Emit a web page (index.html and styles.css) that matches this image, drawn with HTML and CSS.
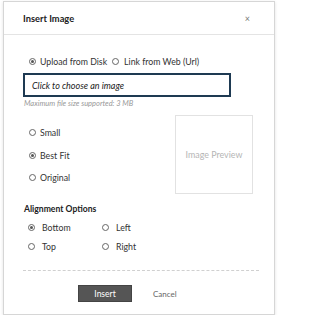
FILE: index.html
```html
<!DOCTYPE html>
<html>
<head>
<meta charset="utf-8">
<link rel="stylesheet" href="styles.css">
</head>
<body>
<div class="dialog">
  <div class="header">
    <span class="title">Insert Image</span>
    <span class="close">×</span>
  </div>
  <div class="body">
    <div class="source">
      <label class="opt"><span class="radio on"></span>Upload from Disk</label>
      <label class="opt"><span class="radio"></span>Link from Web (Url)</label>
    </div>
    <div class="file">Click to choose an image</div>
    <div class="hint">Maximum file size supported: 3 MB</div>
    <div class="sizes">
      <div class="size-list">
        <label class="opt"><span class="radio"></span>Small</label>
        <label class="opt"><span class="radio on"></span>Best Fit</label>
        <label class="opt"><span class="radio"></span>Original</label>
      </div>
      <div class="preview">Image Preview</div>
    </div>
    <div class="heading">Alignment Options</div>
    <div class="align">
      <label class="opt"><span class="radio on"></span>Bottom</label>
      <label class="opt"><span class="radio"></span>Left</label>
      <label class="opt"><span class="radio"></span>Top</label>
      <label class="opt"><span class="radio"></span>Right</label>
    </div>
    <div class="footer">
      <button class="btn-insert">Insert</button>
      <span class="cancel">Cancel</span>
    </div>
  </div>
</div>
</body>
</html>
```
FILE: styles.css
```css
html, body {
  margin: 0;
  padding: 0;
  background: #fff;
}
body {
  font-family: Lato, "Open Sans", sans-serif;
  color: #333;
  font-size: 8.75px;
}
.dialog {
  box-sizing: border-box;
  margin: 1px 0 0 3px;
  width: 272px;
  height: 314px;
  border: 1px solid #d6d6d6;
  box-shadow: 0 1px 3px rgba(0,0,0,0.12);
  background: #fff;
}
.header {
  height: 32px;
  border-bottom: 1px solid #e4e4e4;
  display: flex;
  align-items: center;
  justify-content: space-between;
  padding: 0 24px 0 19px;
}
.title {
  font-weight: bold;
  font-size: 9.3px;
  color: #222;
}
.close {
  font-size: 9px;
  color: #777;
}
.body {
  padding: 0 16px 0 19px;
}
.opt {
  display: flex;
  align-items: center;
  white-space: nowrap;
}
.radio {
  box-sizing: border-box;
  width: 7px;
  height: 7px;
  border: 1px solid #666;
  border-radius: 50%;
  margin-right: 4px;
  display: inline-flex;
  align-items: center;
  justify-content: center;
  flex: none;
}
.radio.on::after {
  content: "";
  width: 3px;
  height: 3px;
  border-radius: 50%;
  background: #555;
}
.source {
  display: flex;
  gap: 5px;
  padding: 20px 0 0 6px;
  height: 13px;
}
.source .opt + .opt .radio {
  margin-right: 5px;
}
.file {
  box-sizing: border-box;
  margin-top: 5px;
  width: 208px;
  height: 24px;
  border: 2px solid #1e3a52;
  font-style: italic;
  font-size: 9px;
  color: #222;
  display: flex;
  align-items: center;
  padding-left: 7px;
}
.hint {
  font-style: italic;
  font-size: 7.5px;
  color: #999;
  margin-top: 2px;
  padding-left: 1px;
}
.sizes {
  display: flex;
  justify-content: space-between;
  margin-top: 6px;
  padding-right: 5px;
}
.size-list {
  display: flex;
  flex-direction: column;
  gap: 9.5px;
  padding: 12px 0 0 6px;
}
.size-list .opt {
  height: 13px;
}
.preview {
  box-sizing: border-box;
  width: 78px;
  height: 79px;
  margin-top: 1px;
  border: 1px solid #e2e2e2;
  display: flex;
  align-items: center;
  justify-content: center;
  font-size: 8.9px;
  color: #b5b5b5;
}
.heading {
  font-weight: bold;
  font-size: 8.6px;
  color: #222;
  margin-top: 10px;
  padding-left: 1px;
}
.align {
  display: grid;
  grid-template-columns: 74px auto;
  row-gap: 6px;
  padding: 7px 0 0 5px;
}
.align .opt {
  height: 13px;
}
.align .radio {
  margin-right: 7px;
}
.footer {
  margin-top: 17px;
  border-top: 1px dashed #d0d0d0;
  margin-right: -1px;
  display: flex;
  align-items: center;
  padding: 14px 0 0 55px;
  gap: 21px;
}
.btn-insert {
  width: 54px;
  height: 17px;
  border: 1px solid #444;
  background: #555;
  color: #fff;
  font-family: inherit;
  font-size: 8.5px;
  padding: 0;
}
.cancel {
  color: #666;
  font-size: 8px;
}
```
